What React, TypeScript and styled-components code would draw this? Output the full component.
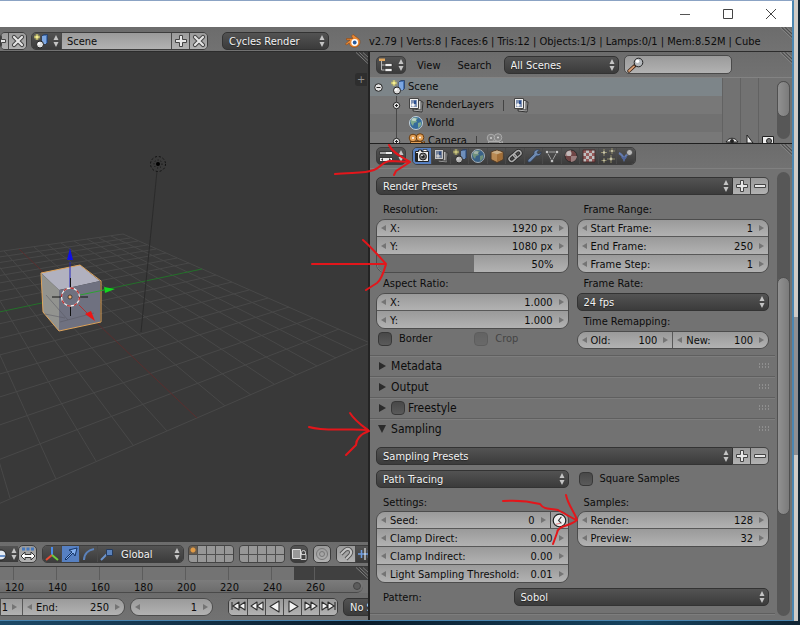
import React from "react";
import styled, { createGlobalStyle, css } from "styled-components";

const GlobalStyle = createGlobalStyle`
  *, *::before, *::after { box-sizing: border-box; }
  html, body { margin: 0; padding: 0; }
  body, button, input, select {
    font-family: "DejaVu Sans Condensed", "DejaVu Sans", sans-serif;
    font-size: 11px;
    line-height: 20px;
    color: #0c0c0c;
  }
  button, input, select { margin: 0; padding: 0; border: 0; background: none; outline: 0; }
  svg { display: block; flex: none; }
`;

/* ---------- frame ---------- */

const Desktop = styled.div`
  position: relative;
  display: flex;
  height: 100vh;
  min-height: 600px;
  padding: 0 2px 4px 0;
  overflow: hidden;
  background: linear-gradient(90deg, #1d4a68, #0b1c2a 45%, #164460 80%, #0f2433);
`;

const AppWindow = styled.div`
  display: flex;
  flex: 1;
  flex-direction: column;
  min-width: 0;
  border: solid #4b86b0;
  border-width: 1px 2px 1px 0;
  border-top-color: #8ba3c4;
  background: #727272;
`;

const BackWindowEdge = styled.div`
  width: 4px;
  background: linear-gradient(#cfcbc6 0 317px, #8e8f92 317px 455px, #cfcbc6 455px);
`;

const TitleBar = styled.header`
  display: flex;
  flex: none;
  justify-content: flex-end;
  height: 26px;
  background: #fff;
`;

const CaptionButton = styled.button`
  display: flex;
  align-items: center;
  justify-content: center;
  width: 43px;
`;

const Panes = styled.main`
  display: flex;
  flex: 1;
  min-height: 0;
  border-top: 1px solid #2c2c2c;
`;

const LeftPane = styled.section`
  display: flex;
  flex: 369 1 0;
  flex-direction: column;
  min-width: 0;
  overflow: hidden;
`;

const RightPane = styled.section`
  display: flex;
  flex: 423 1 0;
  flex-direction: column;
  min-width: 0;
  border-left: 2px solid #242424;
  overflow: hidden;
`;

/* ---------- shared controls ---------- */

const HeaderBar = styled.div<{ $h?: number; $pad?: number }>`
  position: relative;
  display: flex;
  flex: none;
  align-items: center;
  height: ${(p) => p.$h ?? 24}px;
  padding-left: ${(p) => p.$pad ?? 0}px;
  overflow: hidden;
  white-space: nowrap;
  background: linear-gradient(#6c6c6c, #727272);
`;

const InfoBar = styled(HeaderBar)`
  padding-top: 3px;
`;

const StatusText = styled.span`
  padding-top: 2px;
`;

const Corner = styled.div`
  position: absolute;
  top: 0;
  right: 0;
`;

const darkFill = css`
  background: linear-gradient(#535353, #3b3b3b);
  color: #efefef;
`;
const lightFill = css`
  background: linear-gradient(#9a9a9a, #b2b2b2);
`;

const Joined = styled.div`
  display: flex;
  flex: none;
  height: 18px;
  border: 1px solid #3d3d3d;
  border-radius: 5px;
  overflow: hidden;
  & > * + * { border-left: 1px solid #4a4a4a; }
`;

type Tone = "dark" | "light" | "active";
const IconButton = styled.button<{ $w?: number; $tone?: Tone; $alone?: boolean }>`
  display: flex;
  flex: none;
  align-items: center;
  justify-content: center;
  gap: 3px;
  width: ${(p) => p.$w ?? 18}px;
  overflow: hidden;
  ${(p) => (p.$tone === "dark" ? darkFill : lightFill)}
  ${(p) => p.$tone === "active" && css`background: #5680c2;`}
  ${(p) => p.$alone && css`height: 18px; border: 1px solid #3d3d3d; border-radius: 5px;`}
`;

const ClippedButton = styled(IconButton)`
  justify-content: flex-end;
  padding-right: 1px;
`;

const NameInput = styled.input`
  ${lightFill}
  width: 110px;
  padding: 2px 0 0 5px;
`;

const MenuBox = styled.div<{ $w?: number; $flat?: boolean; $open?: boolean }>`
  display: grid;
  flex: ${(p) => (p.$w ? "none" : "1")};
  align-items: center;
  width: ${(p) => (p.$w ? `${p.$w}px` : "auto")};
  min-width: 0;
  height: 18px;
  border: 1px solid #333;
  border-radius: ${(p) => (p.$open ? "5px 0 0 5px" : "5px")};
  ${darkFill}
  ${(p) => p.$flat && css`height: 16px; border: 0; border-radius: 0;`}
  & > * { grid-area: 1 / 1; }
  & > svg { justify-self: end; margin-right: 2px; pointer-events: none; }
`;

const MenuSelect = styled.select`
  appearance: none;
  width: 100%;
  height: 16px;
  padding: 2px 0 0 6px;
  line-height: 14px;
  color: #f2f2f2;
  text-shadow: 0 1px 1px #222;
`;

function Menu({ value, label, w, flat, open }: { value: string; label: string; w?: number; flat?: boolean; open?: boolean }) {
  return (
    <MenuBox $w={w} $flat={flat} $open={open}>
      <MenuSelect aria-label={label}><option>{value}</option></MenuSelect>
      <UpDown />
    </MenuBox>
  );
}

const FieldGroup = styled.div<{ $row?: boolean }>`
  display: flex;
  flex-direction: ${(p) => (p.$row ? "row" : "column")};
  border: 1px solid #4c4c4c;
  border-radius: 9px;
  overflow: hidden;
  ${(p) => !p.$row && css`&& > * { flex: none; }`}
  & > * + * { border-${(p) => (p.$row ? "left" : "top")}: 1px solid #585858; }
`;

const FieldBox = styled.label<{ $first?: boolean }>`
  display: flex;
  flex: 1;
  align-items: center;
  gap: 4px;
  min-width: 0;
  height: ${(p) => (p.$first ? 16 : 18)}px;
  padding: 0 4px;
  white-space: nowrap;
  ${lightFill}
`;

const FieldName = styled.span`
  padding-top: 2px;
  line-height: 14px;
`;

const FieldInput = styled.input`
  flex: 1;
  width: 20px;
  min-width: 0;
  height: 16px;
  padding: 2px 2px 0 0;
  text-align: right;
`;

const SeedLine = styled.div`
  display: flex;
  & > button { border-left: 1px solid #4a4a4a; }
`;

const SliderBox = styled.label`
  display: grid;
  align-items: center;
  height: 18px;
  & > * { grid-area: 1 / 1; }
`;

const Slider = styled.input`
  appearance: none;
  width: 100%;
  height: 17px;
  background: linear-gradient(90deg, #6d6d6d 0 51%, transparent 51%), linear-gradient(#9a9a9a, #b2b2b2);
  &::-webkit-slider-thumb { appearance: none; width: 1px; height: 17px; }
`;

const SliderValue = styled.output`
  justify-self: end;
  padding: 2px 14px 0 0;
  line-height: 14px;
  pointer-events: none;
`;

function Field({ name, value, first }: { name?: string; value: string; first?: boolean }) {
  return (
    <FieldBox $first={first}>
      <Arrow dir="left" />
      {name && <FieldName>{name}</FieldName>}
      <FieldInput defaultValue={value} aria-label={name ? undefined : "Current frame"} />
      <Arrow dir="right" />
    </FieldBox>
  );
}

const CheckLabel = styled.label<{ $off?: boolean; $title?: boolean }>`
  display: flex;
  flex: 1;
  align-items: center;
  gap: ${(p) => (p.$title ? 3 : 7)}px;
  height: 18px;
  padding-left: ${(p) => (p.$title ? 0 : 2)}px;
  ${(p) => p.$off && css`color: #444; & > input { opacity: 0.35; }`}
`;

const Check = styled.input`
  appearance: none;
  flex: none;
  width: 14px;
  height: 14px;
  border: 1px solid #383838;
  border-radius: 4px;
  background: linear-gradient(#484848, #5a5a5a);
`;

/* ---------- glyphs ---------- */

const UpDown = () => (
  <svg width="8" height="14" viewBox="0 0 8 14"><path d="M4 1 6.500 6h-5zM4 13l2.500-5h-5z" fill="#c4c4c4" /></svg>
);
const Arrow = ({ dir }: { dir: "left" | "right" }) => (
  <svg width="5" height="8" viewBox="0 0 5 8"><path d={dir === "left" ? "M5 1v6L0 4z" : "M0 1v6L5 4z"} fill="#747474" /></svg>
);
const Plus = () => (
  <svg width="14" height="14" viewBox="0 0 14 14"><path d="M5.500 1.500h3v4h4v3h-4v4h-3v-4h-4v-3h4z" fill="#e6e6e6" stroke="#444" /></svg>
);
const Minus = () => (
  <svg width="14" height="14" viewBox="0 0 14 14"><path d="M1.500 5.500h11v3h-11z" fill="#e6e6e6" stroke="#444" /></svg>
);
const Cross = () => (
  <svg width="14" height="14" viewBox="0 0 14 14"><path d="m3 3 8 8m0-8-8 8" stroke="#444" strokeWidth="4.200" strokeLinecap="round" /><path d="m3 3 8 8m0-8-8 8" stroke="#e6e6e6" strokeWidth="2.200" strokeLinecap="round" /></svg>
);
const SceneIcon = () => (
  <svg width="16" height="16" viewBox="0 0 16 16">
    <circle cx="4" cy="4" r="3" fill="#a8a568" opacity=".6" /><path d="M4 1v6M1 4h6" stroke="#d9d472" /><circle cx="4" cy="4" r="1.600" fill="#f6ee92" />
    <path d="m9 3 2-1.500h3.500v8L13 11H9z" fill="#4774b5" stroke="#1f355c" strokeWidth=".7" /><path d="M9 3h4v8H9z" fill="#7da7e2" /><circle cx="7" cy="11.500" r="3.500" fill="#ddd" stroke="#222" /><circle cx="6" cy="10.500" r="1.300" fill="#fff" />
  </svg>
);
const LayersIcon = () => (
  <svg width="16" height="16" viewBox="0 0 16 16">
    <path d="m7 4 8 1-1 10-9-1z" fill="#b8b8b8" stroke="#333" /><path d="m5 3 8 .5v9.500L4 12z" fill="#ddd" stroke="#444" /><path d="M1.500 1.500h9v10h-9z" fill="#f2f2f2" stroke="#444" />
    <path d="M3 3h6v7H3z" fill="#8193b3" /><circle cx="5" cy="8" r="1.700" fill="#f5f5f5" /><path d="M6 3.500h2V7H6z" fill="#294e91" />
  </svg>
);
const WorldIcon = () => (
  <svg width="16" height="16" viewBox="0 0 16 16">
    <circle cx="8" cy="8" r="6.500" fill="#356b9c" stroke="#c4d2dc" /><path d="M3 5c2-3 5-3 7-2l-2 2 1 2-3 1-1 3C3 9 2 7 3 5zm7 3 3-1c1 3-1 5-3 6z" fill="#7eaa8e" /><ellipse cx="6" cy="4.500" rx="2.500" ry="1.500" fill="#fff" opacity=".5" />
  </svg>
);
const CameraIcon = () => (
  <svg width="16" height="16" viewBox="0 0 16 16">
    <path d="M1.500 3.500h3V2h3v1.500h7v10h-13z" fill="#ececec" stroke="#222" /><path d="M9 1.500h4v2H9z" fill="#fff" stroke="#222" strokeWidth=".7" /><path d="M2 5h2v8H2z" fill="#222" /><circle cx="9" cy="8.500" r="3.500" fill="#777" stroke="#222" /><circle cx="9" cy="8.500" r="1.600" fill="#1e1e1e" /><circle cx="8" cy="7.500" r=".8" fill="#fff" />
  </svg>
);
const MovieCam = ({ ghost }: { ghost?: boolean }) => (
  <svg width="18" height="16" viewBox="0 0 18 16" opacity={ghost ? 0.65 : 1}>
    <g fill={ghost ? "#8b8b8b" : "#e3a056"} stroke={ghost ? "#c6c6c6" : "#6a3c10"}><circle cx="5" cy="5" r="3.800" /><circle cx="12" cy="4.500" r="3.800" /><path d="M2.500 8.500h11v6h-11zM13.500 10l3-1.500v5l-3-1.500z" /></g>
    <circle cx="5" cy="5" r="1" fill="#fff" /><circle cx="12" cy="4.500" r="1" fill="#fff" />
  </svg>
);
const OutlinerIcon = () => (
  <svg width="16" height="16" viewBox="0 0 16 16"><path d="M1 1.500h6v2.500H1z" fill="#e2a75c" /><path d="M3.500 4v9H8M3.500 8H8" fill="none" stroke="#b5b5b5" /><path d="M7 6.500h7v3H7zM7 11.500h7v3H7z" fill="#eee" stroke="#222" strokeWidth=".6" /></svg>
);
const PropsIcon = () => (
  <svg width="16" height="16" viewBox="0 0 16 16"><path d="M1.500 3.500h13v3h-13zM1.500 9.500h13v4h-13z" fill="#eee" stroke="#222" strokeWidth=".8" /><path d="M2 4h6v2H2z" fill="#aaa" /><path d="m5 10-2 1.500L5 13zm6 0 2 1.500-2 1.500z" fill="#333" /></svg>
);
const CubeIcon = () => (
  <svg width="16" height="16" viewBox="0 0 16 16"><path d="m2 4 6-2 6 2v7.500L8 14.500l-6-3z" fill="#e0a25a" stroke="#59381a" /><path d="m2.500 4.200 5.500 2 5.500-2L8 2.500z" fill="#f4cf9c" /><path d="M8 6.500v7.500l5.500-2.800V4.500z" fill="#c07c34" /></svg>
);
const LinkIcon = () => (
  <svg width="16" height="16" viewBox="0 0 16 16" fill="none">
    <g transform="rotate(-40 8 8)"><g stroke="#222" strokeWidth="3.200"><rect x="1" y="5.500" width="8" height="5" rx="2.500" /><rect x="7" y="5.500" width="8" height="5" rx="2.500" /></g><g stroke="#d0d0d0" strokeWidth="1.500"><rect x="1" y="5.500" width="8" height="5" rx="2.500" /><rect x="7" y="5.500" width="8" height="5" rx="2.500" /></g></g>
  </svg>
);
const WrenchIcon = () => (
  <svg width="16" height="16" viewBox="0 0 16 16"><path d="M13.500 2 11 4.300l.8 1.300 1.700-.2L15 3.800c.3 3-2 4.700-4.400 4L4.500 14 2 14.300 1.800 12 8 6c-.8-2.800 2-5.200 5.500-4z" fill="#7ba0d6" stroke="#25354f" strokeWidth=".8" /></svg>
);
const MeshIcon = () => (
  <svg width="16" height="16" viewBox="0 0 16 16"><path d="M3 4h10L8 13z" fill="none" stroke="#bcbcbc" /><g fill="#eee" stroke="#222" strokeWidth=".5"><path d="M1.500 2.500h3v3h-3zM11.500 2.500h3v3h-3zM6.500 11.500h3v3h-3z" /></g></svg>
);
const MaterialIcon = () => (
  <svg width="16" height="16" viewBox="0 0 16 16"><circle cx="8" cy="8" r="6" fill="#7e4444" stroke="#222" /><path d="M8 2a6 6 0 0 0-6 6h6zM8 8h6a6 6 0 0 1-6 6z" fill="#b89090" /><circle cx="6" cy="5.500" r="2.600" fill="#fff" opacity=".7" /></svg>
);
const TextureIcon = () => (
  <svg width="16" height="16" viewBox="0 0 16 16"><path d="M2 2h12v12H2z" fill="#e6e6e6" /><path d="M2 2h3v3H2zM8 2h3v3H8zM5 5h3v3H5zM11 5h3v3h-3zM2 8h3v3H2zM8 8h3v3H8zM5 11h3v3H5zM11 11h3v3h-3z" fill="#b06060" /><path d="M2 2h12v12H2z" fill="none" stroke="#4c2525" /></svg>
);
const ParticlesIcon = () => (
  <svg width="16" height="16" viewBox="0 0 16 16"><path d="M4 1v7M1 4.500h6M12 0v6M9 3h6M11 7v8M7 11h8M4 10v5M1.500 12.500h5" stroke="#a8a274" /><g fill="#f5f0cf"><circle cx="4" cy="4.500" r="1.200" /><circle cx="12" cy="3" r="1.100" /><circle cx="11" cy="11" r="1.400" /><circle cx="4" cy="12.500" r="1" /></g></svg>
);
const PhysicsIcon = () => (
  <svg width="16" height="16" viewBox="0 0 16 16"><path d="M1 5c2 1 4 3 5 6 1-3 2-4 4-5" fill="none" stroke="#6d8bd0" strokeWidth="2" /><path d="m3 9 3 4 3-4z" fill="#5470b8" /><circle cx="11.500" cy="4.500" r="3" fill="#ddd" stroke="#333" strokeWidth=".7" /></svg>
);
const ClockIcon = () => (
  <svg width="15" height="15" viewBox="0 0 16 16"><circle cx="8" cy="8" r="6.700" fill="#eee" stroke="#222" strokeWidth="1.300" /><path d="M10 4 7 8l3 3" fill="none" stroke="#333" strokeWidth="1.200" /><path d="m4 12 5-1" stroke="#d77" /></svg>
);
const SearchIcon = () => (
  <svg width="18" height="16" viewBox="0 0 18 16"><path d="m2 14 6-5.500" stroke="#3c2414" strokeWidth="3.400" strokeLinecap="round" /><path d="m2 14 5-4.600" stroke="#d79c74" strokeWidth="1.800" strokeLinecap="round" /><circle cx="11.500" cy="5.500" r="4.300" fill="#b4b8bc" stroke="#222" /><circle cx="10.500" cy="4.200" r="1.800" fill="#fff" /></svg>
);
const BlenderLogo = () => (
  <svg width="16" height="14" viewBox="0 0 16 14"><path d="M8 .5 14 5c3 4-1 8.500-5 8.300C6 13 4.200 11 4.300 9L1.500 11 .5 9.800 5 6H1.500V4.500h6.300L6.500 2z" fill="#ea8a35" stroke="#8c4512" strokeWidth=".6" /><circle cx="9.700" cy="8.500" r="3.400" fill="#fff" /><circle cx="9.700" cy="8.500" r="1.900" fill="#27599b" /></svg>
);
const Hatch = () => (
  <svg width="12" height="12" viewBox="0 0 14 13"><path d="m0 0 14 13M4 0l10 9.500M8 0l6 5.500" stroke="#8a8a8a" /><path d="m2 0 12 11.500M6 0l8 7.500" stroke="#444" /></svg>
);
const Grip = () => (
  <svg width="10" height="6" viewBox="0 0 10 6"><path d="M0 1h10M0 4h10" stroke="#999" strokeDasharray="1 2" strokeWidth="1.500" /></svg>
);
const Triangle = ({ open }: { open?: boolean }) => (
  <svg width="8" height="10" viewBox="0 0 8 10"><path d={open ? "M0 1h8L4 9z" : "M1 1v8l7-4z"} fill="#2b2b2b" /></svg>
);
const Expander = ({ minus }: { minus?: boolean }) => (
  <svg width="9" height="9" viewBox="0 0 9 9"><circle cx="4.500" cy="4.500" r={minus ? 3.8 : 3.2} fill="#e4e4e4" stroke="#222" /><path d={minus ? "M2.500 4.500h4" : "M3 4.500h3M4.500 3v3"} stroke="#222" /></svg>
);

/* ---------- 3D viewport ---------- */

const Viewport = styled.div`
  position: relative;
  flex: 1;
  min-height: 0;
  background: #393939;
  & > svg { width: 100%; height: 100%; }
`;

const project = (u: number, v: number) => {
  const w = -0.43 * u + 0.199 * v + 1;
  return [(42.3 * u + 172.2 * v + 70) / w, (-58.9 * u + 25.6 * v + 297) / w].map(Math.round).join(" ");
};
const steps = Array.from({ length: 17 }, (_, i) => (i - 8) / 8).filter((s) => s !== 0);
const floor = steps.map((s) => `M${project(-1, s)} L${project(1, s)} M${project(s, -1)} L${project(s, 1)}`).join(" ");

const ViewportScene = () => (
  <svg viewBox="0 52 369 490" preserveAspectRatio="xMinYMid slice" fill="none">
    <path d={floor} stroke="#484848" />
    <path d={`M${project(-1, 0)} L${project(1, 0)}`} stroke="#5a2e2e" />
    <path d={`M${project(0, -1)} L${project(0, 1)}`} stroke="#24702a" />
    <path d="M157 171 141 332" stroke="#2b2b2b" />
    <circle cx="158" cy="164" r="7.500" stroke="#111" strokeDasharray="2 2" /><circle cx="158" cy="164" r="4" stroke="#111" strokeDasharray="1 2" /><circle cx="158" cy="164" r="2" fill="#000" />
    <path d="m41 273 39-8 20 16-41 9z" fill="#b1b1bf" />
    <path d="m41 273 18 17v41l-16-19z" fill="#92938f" />
    <path d="m59 290 41-9v41l-41 9z" fill="#6f7180" />
    <path d="m41 273 39-8 21 16v41l-42 9-16-19z" stroke="#dfa45b" strokeLinejoin="round" />
    <path d="m46 295 22 25M60 322l34-9M45 314l20 4" stroke="#55565f" opacity=".5" />
    <path d="M70 288v-26" stroke="#2323b8" /><path d="m67 260 3-12 3 12z" fill="#1010e6" />
    <path d="m80 295 24-5" stroke="#2ca332" /><path d="m104 287 11 2-10 4z" fill="#12d81c" />
    <path d="m79 305 8 8" stroke="#a33" /><path d="m85 314 6-3 4 10z" fill="#ee1414" />
    <path d="M52 297h10m16 0h10M70.500 278v10m0 17v11" stroke="#111" />
    <circle cx="70.500" cy="297" r="9" stroke="#eee" strokeWidth="1.300" /><circle cx="70.500" cy="297" r="9" stroke="#b33" strokeWidth="1.300" strokeDasharray="3.500 3.500" />
    <circle cx="70" cy="297" r="2" fill="#f0b070" stroke="#222" strokeWidth=".7" />
  </svg>
);

const ExpandTab = styled.button`
  position: absolute;
  top: 21px;
  right: 1px;
  width: 12px;
  height: 13px;
  border-radius: 3px 0 0 3px;
  background: #2e2e2e;
  color: #909090;
  line-height: 13px;
`;

const LayerGrid = styled.div`
  display: grid;
  flex: none;
  grid-template-columns: repeat(5, 1fr);
  gap: 1px;
  width: 46px;
  height: 18px;
  border: 1px solid #444;
  border-radius: 4px;
  overflow: hidden;
  background: #505050;
`;

const LayerCell = styled.button<{ $on?: boolean }>`
  background: ${(p) => (p.$on ? "radial-gradient(circle, #e09a45 2px, #6a5c4c 3px)" : "#979797")};
`;

const Layers = ({ active }: { active?: boolean }) => (
  <LayerGrid>
    {Array.from({ length: 10 }, (_, i) => <LayerCell key={i} $on={active && i === 0} aria-label={`Layer ${i + 1}`} />)}
  </LayerGrid>
);

/* ---------- timeline ---------- */

const Track = styled.div`
  position: relative;
  display: flex;
  flex: none;
  height: 14px;
  border-top: 1px solid #3a3a3a;
  overflow: hidden;
  background: linear-gradient(90deg, #737373 0 80%, #404040 80%);
`;

const Ruler = styled.div`
  display: flex;
  flex: none;
  align-items: center;
  height: 13px;
  margin-right: 5px;
  padding-right: 2px;
  border-bottom: 1px solid #4a4a4a;
  border-radius: 0 7px 7px 0;
  overflow: hidden;
  background: linear-gradient(#7c7c7c, #6c6c6c);
  &::after { content: ""; width: 8px; height: 8px; margin-left: auto; border: 1px solid #444; border-radius: 4px; background: #5c5c5c; }
`;

const Tick = styled.span`
  flex: 0 0 43px;
  padding-top: 2px;
  line-height: 13px;
  text-align: center;
  &:first-child { margin-left: -7px; }
`;

const TickLine = styled(Tick)`
  background: linear-gradient(90deg, transparent 20px, #5c5c5c 20px 21px, transparent 21px);
`;

const frames = [120, 140, 160, 180, 200, 220, 240, 260];

const TimelineField = styled.div<{ $w: number; $cut?: boolean }>`
  flex: none;
  width: ${(p) => p.$w}px;
  & > div { border-radius: ${(p) => (p.$cut ? "0 9px 9px 0" : "9px")}; }
`;

const StartFrame = styled(FieldBox)`
  flex: 0 0 21px;
  padding: 0 5px 0 0;
  height: 16px;
  gap: 2px;
`;

const playback = [
  { n: "Jump to start", d: "M3 3v8M10 3v8L4 7zM16 3v8l-6-4z" },
  { n: "Previous keyframe", d: "M9 3v8L3 7zM15 3v8L9 7z" },
  { n: "Play reversed", d: "M13 2v11L4 7.500z" },
  { n: "Play", d: "M5 2v11l9-5.500z" },
  { n: "Next keyframe", d: "M3 3v8l6-4zM9 3v8l6-4z" },
  { n: "Jump to end", d: "M2 3v8l6-4zM8 3v8l6-4zM15 3v8" },
];

/* ---------- outliner ---------- */

const HeaderText = styled.button`
  padding: 2px 10px 0 7px;
`;

const SearchBox = styled.label`
  display: flex;
  flex: 0 1 108px;
  align-items: center;
  width: 108px;
  min-width: 0;
  height: 19px;
  margin-left: 5px;
  padding-left: 2px;
  border: 1px solid #4a4a4a;
  border-radius: 5px;
  ${lightFill}
  & > input { flex: 1; width: 20px; min-width: 0; }
`;

const Outliner = styled.div`
  display: flex;
  flex: none;
  height: 67px;
  border-top: 1px solid #838383;
  border-bottom: 1px solid #1f1f1f;
  overflow: hidden;
`;

const Tree = styled.ul`
  flex: 1;
  margin: 0;
  padding: 0;
  list-style: none;
`;

const TreeRow = styled.li<{ $depth: number; $selected?: boolean; $alt?: boolean }>`
  display: flex;
  align-items: center;
  gap: 2px;
  height: 18px;
  padding-left: ${(p) => 4 + p.$depth * 18}px;
  white-space: nowrap;
  background-color: ${(p) => (p.$selected ? "#7d8589" : p.$alt ? "#787878" : "#717171")};
  ${(p) => p.$depth > 0 && css`background-image: linear-gradient(90deg, transparent 26px, #484848 26px 27px, transparent 27px);`}
  & > svg:first-child { margin-right: 5px; }
`;

const Indent = styled.span`
  width: 14px;
`;

const Bar = styled.span`
  width: 1px;
  height: 11px;
  margin: 0 7px;
  background: #444;
`;

const Toggles = styled.div`
  display: grid;
  flex: none;
  grid-template-columns: repeat(3, 18px);
  align-items: end;
  width: 55px;
  background: #727272;
  & > button { height: 100%; display: flex; align-items: end; justify-content: center; border-left: 1px solid #626262; overflow: hidden; }
`;

const ScrollColumn = styled.div<{ $before: number; $after: number }>`
  display: flex;
  flex: none;
  flex-direction: column;
  width: 13px;
  margin: 3px 2px 4px 0;
  border-radius: 7px;
  background: #575757;
  &::before { content: ""; flex: ${(p) => p.$before}; }
  &::after { content: ""; flex: ${(p) => p.$after}; }
`;

const Thumb = styled.div<{ $size: number }>`
  flex: ${(p) => p.$size};
  border: 1px solid #505050;
  border-radius: 7px;
  background: linear-gradient(90deg, #919191, #7b7b7b);
`;

/* ---------- properties ---------- */

const Properties = styled.div`
  display: flex;
  flex: 1;
  min-height: 0;
  border-top: 1px solid #808080;
  background: #727272;
`;

const Panels = styled.div`
  display: flex;
  flex: 1;
  flex-direction: column;
  min-width: 0;
  margin-right: 2px;
  overflow: hidden;
`;

const PanelBody = styled.div<{ $first?: boolean }>`
  display: flex;
  flex-direction: column;
  gap: 5px;
  padding: 8px 6px ${(p) => (p.$first ? 6 : 7)}px 6px;
`;

const PanelHead = styled.div`
  display: flex;
  flex: none;
  align-items: center;
  gap: 5px;
  height: 21px;
  padding: 0 6px 0 8px;
  border-top: 1px solid #5f5f5f;
  box-shadow: inset 0 1px #7d7d7d;
  font-size: 12px;
  & > svg:last-child { margin-left: auto; }
`;

const PanelTitle = styled.h2`
  margin: 0;
  font-size: 12px;
  font-weight: 400;
`;

const PresetRow = styled.div`
  display: flex;
  & > button { height: 18px; border: solid #444; border-width: 1px 1px 1px 0; }
  & > button:last-child { border-radius: 0 5px 5px 0; }
`;

const Columns = styled.div`
  display: grid;
  grid-template-columns: 1fr 1fr;
  column-gap: 8px;
`;

const Stack = styled.div<{ $tight?: boolean }>`
  display: flex;
  flex-direction: column;
  gap: ${(p) => (p.$tight ? 0 : 1)}px;
`;

const Caption = styled.div`
  height: 18px;
  padding-left: 7px;
`;

const Line = styled.div`
  display: flex;
  align-items: center;
  min-height: 18px;
`;

const PatternCaption = styled(Caption)`
  flex: 0 0 35%;
`;

const Presets = ({ name }: { name: string }) => (
  <PresetRow>
    <Menu value={name} label={name} open />
    <IconButton aria-label="Add preset"><Plus /></IconButton>
    <IconButton aria-label="Remove preset"><Minus /></IconButton>
  </PresetRow>
);

const PanelEnd = styled.div`
  height: 10px;
  border-top: 1px solid #5f5f5f;
  box-shadow: inset 0 1px #7d7d7d;
`;

const tabs = [
  ["Render", CameraIcon], ["Render Layers", LayersIcon], ["Scene", SceneIcon], ["World", WorldIcon],
  ["Object", CubeIcon], ["Constraints", LinkIcon], ["Modifiers", WrenchIcon], ["Data", MeshIcon],
  ["Material", MaterialIcon], ["Texture", TextureIcon], ["Particles", ParticlesIcon], ["Physics", PhysicsIcon],
] as const;

const TabBar = styled(Joined)`
  margin-left: 6px;
  & > button + button > svg { opacity: 0.75; }
`;

const Spacer = styled.span<{ $w: number }>`
  flex: none;
  width: ${(p) => p.$w}px;
`;

const Annotations = styled.svg`
  position: absolute;
  inset: 0;
  width: 100%;
  height: 100%;
  pointer-events: none;
`;

export default function App() {
  return (
    <Desktop>
      <GlobalStyle />
      <AppWindow>
        <TitleBar>
          <CaptionButton aria-label="Minimize"><svg width="10" height="10"><path d="M0 5.500h10" stroke="#555" /></svg></CaptionButton>
          <CaptionButton aria-label="Maximize"><svg width="10" height="10"><path d="M.5.5h9v9h-9z" fill="none" stroke="#444" /></svg></CaptionButton>
          <CaptionButton aria-label="Close"><svg width="10" height="10"><path d="m0 0 10 10m0-10L0 10" stroke="#444" /></svg></CaptionButton>
        </TitleBar>
        <InfoBar $h={24}>
          <Joined>
            <ClippedButton $w={7} aria-label="Add screen"><Plus /></ClippedButton>
            <IconButton aria-label="Delete screen"><Cross /></IconButton>
          </Joined>
          <Spacer $w={4} />
          <Joined>
            <IconButton $tone="dark" $w={29} aria-label="Browse scene"><SceneIcon /><UpDown /></IconButton>
            <NameInput defaultValue="Scene" aria-label="Scene name" />
            <IconButton aria-label="Add scene"><Plus /></IconButton>
            <IconButton aria-label="Delete scene"><Cross /></IconButton>
          </Joined>
          <Spacer $w={14} />
          <Menu w={107} value="Cycles Render" label="Render engine" />
          <Spacer $w={16} />
          <BlenderLogo />
          <Spacer $w={8} />
          <StatusText>v2.79 | Verts:8 | Faces:6 | Tris:12 | Objects:1/3 | Lamps:0/1 | Mem:8.52M | Cube</StatusText>
          <Corner><Hatch /></Corner>
        </InfoBar>

        <Panes>
          <LeftPane>
            <Viewport>
              <ViewportScene />
              <Corner><Hatch /></Corner>
              <ExpandTab aria-label="Show properties shelf">+</ExpandTab>
            </Viewport>
            <HeaderBar $h={24}>
              <IconButton $tone="dark" $w={18} aria-label="Viewport shading">
                <svg width="7" height="16"><circle cx="1" cy="9" r="5" fill="#e5ecf5" stroke="#222" /><path d="M-3 10h8" stroke="#6b93cb" strokeWidth="2" /></svg><UpDown />
              </IconButton>
              <IconButton $w={19} $alone aria-label="Manipulate centre points">
                <svg width="16" height="16"><path d="m1 10 4-4v2.500h6V6l4 4-4 4v-2.500H5V14z" fill="#fff" stroke="#333" /><path d="M2 3h12" stroke="#4678bd" strokeWidth="3" strokeDasharray="3 1.500" /></svg>
              </IconButton>
              <Spacer $w={5} />
              <Joined>
                <IconButton $tone="dark" aria-label="Manipulator">
                  <svg width="16" height="16" strokeWidth="2"><path d="M8 9V1" stroke="#4a8be8" /><path d="m8 9-6 5" stroke="#e84c35" /><path d="m8 9 6 5" stroke="#6fcc3c" /></svg>
                </IconButton>
                <IconButton $tone="active" aria-label="Translate">
                  <svg width="16" height="16"><path d="m2 13 7-7-3-2 8-2-2 8-2-3-7 7z" fill="#84b1f0" stroke="#153465" /></svg>
                </IconButton>
                <IconButton $tone="dark" aria-label="Rotate">
                  <svg width="16" height="16"><path d="M3 14C3 8 7 4 13 3" fill="none" stroke="#5b82bb" strokeWidth="2" /></svg>
                </IconButton>
                <IconButton $tone="dark" aria-label="Scale">
                  <svg width="16" height="16"><path d="m2 14 7-7" stroke="#6c94cd" strokeWidth="2" /><path d="M7.500 3.500h6v6h-6z" fill="#5b82bb" stroke="#263c5e" /></svg>
                </IconButton>
                <Menu w={68} flat value="Global" label="Transform orientation" />
              </Joined>
              <Spacer $w={4} /><Layers active /><Spacer $w={5} /><Layers /><Spacer $w={5} />
              <IconButton $alone $tone="dark" aria-label="Lock camera and layers">
                <svg width="16" height="16"><path d="M1.500 3.500h8v9h-8z" fill="#999" stroke="#ddd" /><path d="M10.500 8V6.500a2 2 0 0 1 4 0V8M10 8.500h5v5h-5z" fill="none" stroke="#ccc" /></svg>
              </IconButton>
              <Spacer $w={5} />
              <IconButton $alone aria-label="Proportional editing">
                <svg width="16" height="16" fill="none" stroke="#777"><circle cx="8" cy="8" r="5.500" /><circle cx="8" cy="8" r="2.500" /></svg>
              </IconButton>
              <Spacer $w={5} />
              <Joined>
                <IconButton aria-label="Snap">
                  <svg width="16" height="16" fill="none"><path d="m3 8 4-4c4-3 8 1 5 5l-4 4" stroke="#555" strokeWidth="4" /><path d="m3 8 4-4c4-3 8 1 5 5l-4 4" stroke="#c4c4c4" strokeWidth="2" /></svg>
                </IconButton>
                <IconButton $tone="dark" $w={18} aria-label="Snap element">
                  <svg width="16" height="16"><path d="M1 8h14M4.500 4v8M11.500 4v8" stroke="#6f9de0" strokeWidth="1.500" /><path d="M8 2v12" stroke="#fff" /></svg>
                </IconButton>
              </Joined>
            </HeaderBar>
            <Track>
              {frames.map((f) => <TickLine key={f} />)}
              <Corner><Hatch /></Corner>
            </Track>
            <Ruler>{frames.map((f) => <Tick key={f}>{f}</Tick>)}</Ruler>
            <HeaderBar $h={27}>
              <TimelineField $w={125} $cut>
                <FieldGroup $row>
                  <StartFrame><FieldInput defaultValue="1" aria-label="Start" /><Arrow dir="right" /></StartFrame>
                  <Field first name="End:" value="250" />
                </FieldGroup>
              </TimelineField>
              <Spacer $w={5} />
              <TimelineField $w={83}><FieldGroup $row><Field first value="1" /></FieldGroup></TimelineField>
              <Spacer $w={15} />
              <Joined>
                {playback.map((b) => (
                  <IconButton key={b.n} aria-label={b.n}>
                    <svg width="18" height="15"><path d={b.d} fill="#f4f4f4" stroke="#2d2d2d" strokeWidth="1.100" strokeLinejoin="round" /></svg>
                  </IconButton>
                ))}
              </Joined>
              <Spacer $w={5} />
              <Menu w={75} value="No Sync" label="Sync mode" />
            </HeaderBar>
          </LeftPane>

          <RightPane>
            <HeaderBar $h={25} $pad={6}>
              <IconButton $alone $tone="dark" $w={30} aria-label="Editor type"><OutlinerIcon /><UpDown /></IconButton>
              <Spacer $w={4} />
              <HeaderText>View</HeaderText>
              <HeaderText>Search</HeaderText>
              <Spacer $w={2} />
              <Menu w={115} value="All Scenes" label="Display mode" />
              <SearchBox><SearchIcon /><input type="text" aria-label="Search outliner" /></SearchBox>
              <Corner><Hatch /></Corner>
            </HeaderBar>
            <Outliner>
              <Tree>
                <TreeRow $depth={0} $selected><Expander minus /><SceneIcon />Scene</TreeRow>
                <TreeRow $depth={1} $alt><Expander /><LayersIcon />RenderLayers<Bar /><LayersIcon /></TreeRow>
                <TreeRow $depth={1}><Indent /><WorldIcon />World</TreeRow>
                <TreeRow $depth={1} $alt><Expander /><MovieCam />Camera<Bar /><MovieCam ghost /></TreeRow>
              </Tree>
              <Toggles>
                <button aria-label="Visibility"><svg width="14" height="7"><path d="M1 6c3-5 9-5 12 0z" fill="#eee" stroke="#222" /><circle cx="7" cy="5" r="2" fill="#222" /></svg></button>
                <button aria-label="Selectability"><svg width="10" height="8"><path d="m2 0 6 8H2z" fill="#eee" stroke="#222" /></svg></button>
                <button aria-label="Renderability"><svg width="14" height="8"><path d="M1.500 1.500h11V9h-11z" fill="#eee" stroke="#222" /><circle cx="8" cy="6" r="2.500" fill="#777" stroke="#222" /></svg></button>
              </Toggles>
              <ScrollColumn $before={0} $after={23}><Thumb $size={35} /></ScrollColumn>
            </Outliner>
            <HeaderBar $h={24} $pad={6}>
              <IconButton $alone $tone="dark" $w={30} aria-label="Editor type"><PropsIcon /><UpDown /></IconButton>
              <TabBar>
                {tabs.map(([name, Icon], i) => (
                  <IconButton key={name} $tone={i === 0 ? "active" : "dark"} $w={i % 2 ? 19 : 18} aria-label={name}><Icon /></IconButton>
                ))}
              </TabBar>
              <Corner><Hatch /></Corner>
            </HeaderBar>

            <Properties>
              <Panels>
                <PanelBody $first>
                  <Presets name="Render Presets" />
                  <Columns>
                    <Stack>
                      <Caption>Resolution:</Caption>
                      <FieldGroup>
                        <Field first name="X:" value="1920 px" />
                        <Field name="Y:" value="1080 px" />
                        <SliderBox>
                          <Slider type="range" defaultValue={50} aria-label="Resolution percentage" />
                          <SliderValue>50%</SliderValue>
                        </SliderBox>
                      </FieldGroup>
                      <Caption>Aspect Ratio:</Caption>
                      <FieldGroup>
                        <Field first name="X:" value="1.000" />
                        <Field name="Y:" value="1.000" />
                      </FieldGroup>
                      <Line>
                        <CheckLabel><Check type="checkbox" />Border</CheckLabel>
                        <CheckLabel $off><Check type="checkbox" disabled />Crop</CheckLabel>
                      </Line>
                    </Stack>
                    <Stack>
                      <Caption>Frame Range:</Caption>
                      <FieldGroup>
                        <Field first name="Start Frame:" value="1" />
                        <Field name="End Frame:" value="250" />
                        <Field name="Frame Step:" value="1" />
                      </FieldGroup>
                      <Caption>Frame Rate:</Caption>
                      <Line><Menu value="24 fps" label="Frame rate" /></Line>
                      <Caption>Time Remapping:</Caption>
                      <FieldGroup $row>
                        <Field first name="Old:" value="100" />
                        <Field first name="New:" value="100" />
                      </FieldGroup>
                    </Stack>
                  </Columns>
                </PanelBody>
                <PanelHead><Triangle /><PanelTitle>Metadata</PanelTitle><Grip /></PanelHead>
                <PanelHead><Triangle /><PanelTitle>Output</PanelTitle><Grip /></PanelHead>
                <PanelHead>
                  <Triangle />
                  <CheckLabel $title><Check type="checkbox" />Freestyle</CheckLabel>
                  <Grip />
                </PanelHead>
                <PanelHead><Triangle open /><PanelTitle>Sampling</PanelTitle><Grip /></PanelHead>
                <PanelBody>
                  <Presets name="Sampling Presets" />
                  <Columns>
                    <Line><Menu value="Path Tracing" label="Integrator" /></Line>
                    <CheckLabel><Check type="checkbox" />Square Samples</CheckLabel>
                  </Columns>
                  <Columns>
                    <Stack $tight>
                      <Caption>Settings:</Caption>
                      <FieldGroup>
                        <SeedLine>
                          <Field first name="Seed:" value="0" />
                          <IconButton aria-label="Animate seed"><ClockIcon /></IconButton>
                        </SeedLine>
                        <Field name="Clamp Direct:" value="0.00" />
                        <Field name="Clamp Indirect:" value="0.00" />
                        <Field name="Light Sampling Threshold:" value="0.01" />
                      </FieldGroup>
                    </Stack>
                    <Stack $tight>
                      <Caption>Samples:</Caption>
                      <FieldGroup>
                        <Field first name="Render:" value="128" />
                        <Field name="Preview:" value="32" />
                      </FieldGroup>
                    </Stack>
                  </Columns>
                  <Line>
                    <PatternCaption>Pattern:</PatternCaption>
                    <Menu value="Sobol" label="Pattern" />
                  </Line>
                </PanelBody>
                <PanelEnd />
              </Panels>
              <ScrollColumn $before={106} $after={102}><Thumb $size={237} /></ScrollColumn>
            </Properties>
          </RightPane>
        </Panes>
      </AppWindow>
      <BackWindowEdge />
      <Annotations viewBox="0 0 800 625" fill="none" stroke="#e3161b" strokeWidth="2" strokeLinecap="round" strokeLinejoin="round">
        <path d="M335 174c15-2 29 0 39-4 8-3 8-9 17-9l19 1M389 145c4 9 14 12 21 17M394 175l2-4 14-9" />
        <path d="M312 264h74M363 240c8 7 15 15 23 24-2 7-4 15-9 19l-11 7" />
        <path d="M309 427c17 5 40 1 59 3M350 413c5 8 11 12 18 17M369 431c-9 3-13 9-13 14l-10 10" />
        <path d="M503 501c13-1 25 0 37 3 4 6 10 4 18 6l18 10M566 495c2 10 8 16 11 25M577 520c-8 7-19 5-20 13l-4 11" />
      </Annotations>
    </Desktop>
  );
}
